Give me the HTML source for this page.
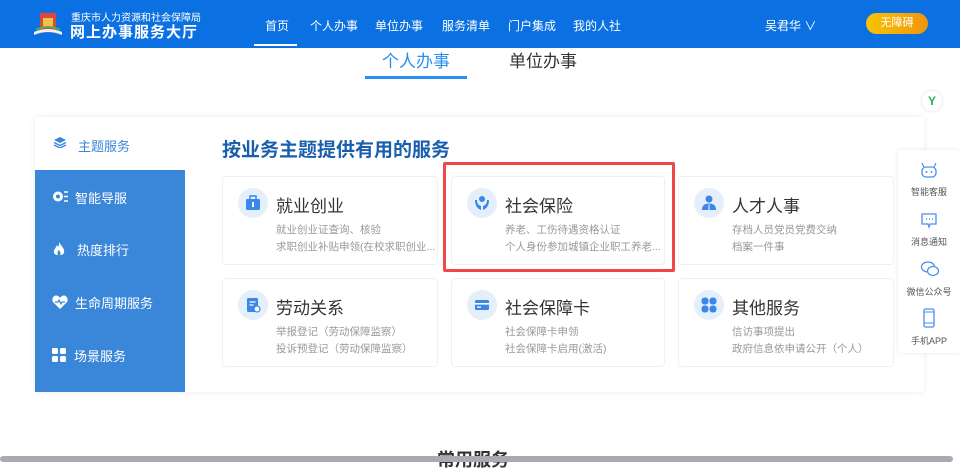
<!DOCTYPE html>
<html><head><meta charset="utf-8"><style>
*{margin:0;padding:0;box-sizing:border-box}
body{width:960px;height:462px;overflow:hidden;background:#fff;font-family:"Liberation Sans","Noto Sans CJK SC",sans-serif;position:relative}
.hdr{position:absolute;left:0;top:0;width:960px;height:48px;background:#0b70e1}
.a{position:absolute;white-space:nowrap}
.nav{color:#fff;font-size:12px;top:17px}
.card{position:absolute;width:216px;height:89px;border:1px solid #eef0f3;border-radius:4px;background:#fff}
.ic{position:absolute;left:15px;top:11px;width:30px;height:30px;border-radius:50%;background:#e5effc}
.ic svg{position:absolute;left:7px;top:7px}
.ct{position:absolute;left:53px;top:15px;font-size:17px;color:#333}
.cs{position:absolute;left:53px;font-size:10.5px;color:#999;width:160px;white-space:nowrap;overflow:hidden;text-overflow:ellipsis}
.side{position:absolute;color:#fff;font-size:13px;left:35px;width:150px}
.side svg{position:absolute;left:17px;top:2px}
.side span{position:absolute;left:40px}
.rt{position:absolute;left:898px;width:62px;text-align:center;font-size:9px;color:#555}
.rti{position:absolute;left:920px}
</style></head><body>
<div class="hdr"></div>
<svg class="a" style="left:32px;top:10px" width="32" height="28" viewBox="0 0 32 28"><rect x="8" y="3" width="16" height="17" fill="#e0473a"/><rect x="11" y="8" width="10" height="10" fill="#f5c04a"/><path d="M2 22 Q16 16 30 22 L30 25 Q16 19 2 25Z" fill="#f0f0f0"/><path d="M4 20 Q16 14 28 20" stroke="#4bb04b" stroke-width="2" fill="none"/></svg>
<div class="a" style="left:71px;top:9px;color:#fff;font-size:10px">重庆市人力资源和社会保障局</div>
<div class="a" style="left:70px;top:21px;color:#fff;font-size:15px;font-weight:bold;letter-spacing:1px">网上办事服务大厅</div>
<div class="a nav" style="left:265px">首页</div>
<div class="a" style="left:254px;top:44px;width:43px;height:2px;background:#fff"></div>
<div class="a nav" style="left:310px">个人办事</div>
<div class="a nav" style="left:375px">单位办事</div>
<div class="a nav" style="left:442px">服务清单</div>
<div class="a nav" style="left:508px">门户集成</div>
<div class="a nav" style="left:573px">我的人社</div>
<div class="a nav" style="left:765px">吴君华 ∨</div>
<div class="a" style="left:866px;top:13px;width:62px;height:21px;border-radius:11px;background:linear-gradient(90deg,#f8c408,#f0960a);color:#fff;font-size:11px;text-align:center;line-height:21px">无障碍</div>
<div class="a" style="left:382px;top:47px;font-size:17px;color:#2a8ff0">个人办事</div>
<div class="a" style="left:365px;top:76px;width:102px;height:3px;background:#2a8ff0"></div>
<div class="a" style="left:509px;top:47px;font-size:17px;color:#333">单位办事</div>
<div class="a" style="left:922px;top:91px;width:20px;height:20px;border-radius:50%;background:#fff;box-shadow:0 0 3px rgba(0,0,0,.15);color:#2fb14a;font-weight:bold;font-size:12px;text-align:center;line-height:20px">Y</div>
<div class="a" style="left:35px;top:117px;width:889px;height:275px;background:#fff;box-shadow:0 0 6px rgba(0,0,0,.08)"></div>
<div class="a" style="left:35px;top:170px;width:150px;height:222px;background:#3a86d9"></div>
<svg class="a" style="left:53px;top:136px" width="14" height="12" viewBox="0 0 14 12"><path d="M7 1L13 4L7 7L1 4Z" fill="#3a86d9"/><path d="M1 6.5L7 9.5L13 6.5M1 9L7 12L13 9" stroke="#3a86d9" stroke-width="1.3" fill="none"/></svg>
<div class="a" style="left:78px;top:136px;font-size:13px;color:#3a86d9">主题服务</div>
<div class="side" style="top:188px"><svg width="16" height="13" viewBox="0 0 16 13"><circle cx="6" cy="6.5" r="5" fill="#fff"/><circle cx="6" cy="6.5" r="2" fill="#3a86d9"/><path d="M12 2h4M12 6.5h4M12 11h4" stroke="#fff" stroke-width="1.5"/></svg><span>智能导服</span></div>
<div class="side" style="top:240px"><svg width="14" height="15" viewBox="0 0 14 15"><path d="M7 0C9 4 13 6 12 11C11 14 3 14 2 11C1 8 4 6 5 3C6 5 7 6 7 0Z" fill="#fff"/><path d="M7 14C5 13 5 10 7 8C9 10 9 13 7 14Z" fill="#3a86d9"/></svg><span style="left:42px">热度排行</span></div>
<div class="side" style="top:293px"><svg width="16" height="14" viewBox="0 0 16 14"><path d="M8 14L1.5 7.5C-1 5 1 0 4.5 0.5C6.5 0.8 7.5 2 8 3C8.5 2 9.5 0.8 11.5 0.5C15 0 17 5 14.5 7.5Z" fill="#fff"/><path d="M3 7h3l1-2 2 4 1-2h3" stroke="#3a86d9" stroke-width="1.2" fill="none"/></svg><span>生命周期服务</span></div>
<div class="side" style="top:346px"><svg width="14" height="14" viewBox="0 0 14 14"><rect x="0" y="0" width="6" height="6" rx="1.5" fill="#fff"/><rect x="8" y="0" width="6" height="6" rx="1.5" fill="#fff"/><rect x="0" y="8" width="6" height="6" rx="1.5" fill="#fff"/><rect x="8" y="8" width="6" height="6" rx="1.5" fill="#fff"/></svg><span style="left:39px">场景服务</span></div>
<div class="a" style="left:222px;top:135px;font-size:19px;font-weight:bold;color:#1a5fae">按业务主题提供有用的服务</div>
<div class="card" style="left:222px;top:176px"><div class="ic"><svg width="16" height="16" viewBox="0 0 16 16"><rect x="1" y="4" width="14" height="11" rx="1.5" fill="#3a86e9"/><rect x="5" y="1" width="6" height="4" fill="none" stroke="#3a86e9" stroke-width="1.5"/><rect x="7" y="7" width="2" height="5" fill="#fff"/></svg></div><div class="ct">就业创业</div><div class="cs" style="top:45px">就业创业证查询、核验</div><div class="cs" style="top:62px">求职创业补贴申领(在校求职创业...</div></div>
<div class="card" style="left:451px;top:176px;width:214px"><div class="ic"><svg width="16" height="16" viewBox="0 0 16 16"><circle cx="8" cy="4" r="3" fill="#3a86e9"/><path d="M1 5C1 11 4 14 7 15L7 11C4 10 3 8 3 5Z M15 5C15 11 12 14 9 15L9 11C12 10 13 8 13 5Z" fill="#3a86e9"/></svg></div><div class="ct">社会保险</div><div class="cs" style="top:45px">养老、工伤待遇资格认证</div><div class="cs" style="top:62px">个人身份参加城镇企业职工养老...</div></div>
<div class="card" style="left:678px;top:176px"><div class="ic"><svg width="16" height="16" viewBox="0 0 16 16"><circle cx="8" cy="4" r="3.5" fill="#3a86e9"/><path d="M1 15C1 10 4 8.5 8 8.5C12 8.5 15 10 15 15Z" fill="#3a86e9"/><path d="M8 9.5V15" stroke="#fff" stroke-width="1"/></svg></div><div class="ct">人才人事</div><div class="cs" style="top:45px">存档人员党员党费交纳</div><div class="cs" style="top:62px">档案一件事</div></div>
<div class="card" style="left:222px;top:278px"><div class="ic"><svg width="16" height="16" viewBox="0 0 16 16"><rect x="2" y="1" width="11" height="14" rx="1.5" fill="#3a86e9"/><path d="M4.5 5h6M4.5 8h4" stroke="#fff" stroke-width="1.2"/><circle cx="12" cy="12" r="3" fill="#fff" stroke="#3a86e9" stroke-width="1.2"/></svg></div><div class="ct">劳动关系</div><div class="cs" style="top:45px">举报登记（劳动保障监察）</div><div class="cs" style="top:62px">投诉预登记（劳动保障监察）</div></div>
<div class="card" style="left:451px;top:278px;width:214px"><div class="ic"><svg width="16" height="16" viewBox="0 0 16 16"><rect x="1" y="3" width="14" height="10" rx="1.5" fill="#3a86e9"/><rect x="1" y="6" width="14" height="1.6" fill="#fff"/><rect x="3" y="9.5" width="4" height="1.3" fill="#fff"/></svg></div><div class="ct">社会保障卡</div><div class="cs" style="top:45px">社会保障卡申领</div><div class="cs" style="top:62px">社会保障卡启用(激活)</div></div>
<div class="card" style="left:678px;top:278px"><div class="ic"><svg width="16" height="16" viewBox="0 0 16 16"><rect x="0.5" y="0.5" width="7" height="7" rx="3" fill="#3a86e9"/><rect x="8.5" y="0.5" width="7" height="7" rx="3" fill="#3a86e9"/><rect x="0.5" y="8.5" width="7" height="7" rx="3" fill="#3a86e9"/><rect x="8.5" y="8.5" width="7" height="7" rx="3" fill="#3a86e9"/></svg></div><div class="ct">其他服务</div><div class="cs" style="top:45px">信访事项提出</div><div class="cs" style="top:62px">政府信息依申请公开（个人）</div></div>
<div class="a" style="left:443px;top:162px;width:232px;height:110px;border:3px solid #f04848;border-radius:2px"></div>
<div class="a" style="left:898px;top:150px;width:62px;height:203px;background:#fff;box-shadow:0 0 5px rgba(0,0,0,.1);border-radius:3px"></div>
<svg class="rti" style="top:162px" width="18" height="18" viewBox="0 0 18 18"><rect x="2" y="5" width="14" height="10" rx="4" fill="none" stroke="#4a8ff0" stroke-width="1.3"/><path d="M4 5L2 1M14 5L16 1" stroke="#4a8ff0" stroke-width="1.2"/><circle cx="6.5" cy="10" r="1" fill="#4a8ff0"/><circle cx="11.5" cy="10" r="1" fill="#4a8ff0"/></svg>
<div class="rt" style="top:185px">智能客服</div>
<svg class="rti" style="top:212px" width="18" height="18" viewBox="0 0 18 18"><path d="M2 2h14v10h-6l-1 3-1-3H2Z" fill="none" stroke="#4a8ff0" stroke-width="1.3"/><path d="M6 7h1M9 7h1M12 7h1" stroke="#4a8ff0" stroke-width="1.5"/></svg>
<div class="rt" style="top:235px">消息通知</div>
<svg class="rti" style="top:260px" width="20" height="18" viewBox="0 0 20 18"><ellipse cx="8" cy="7" rx="6.5" ry="5" fill="none" stroke="#4a8ff0" stroke-width="1.3"/><ellipse cx="13" cy="11" rx="5.5" ry="4.5" fill="#fff" stroke="#4a8ff0" stroke-width="1.3"/></svg>
<div class="rt" style="top:285px">微信公众号</div>
<svg class="rti" style="top:308px" width="18" height="20" viewBox="0 0 18 20"><rect x="4" y="1" width="10" height="18" rx="1.5" fill="none" stroke="#4a8ff0" stroke-width="1.3"/><path d="M4 15h10M4 4h10" stroke="#4a8ff0" stroke-width="1"/></svg>
<div class="rt" style="top:334px">手机APP</div>
<div class="a" style="left:437px;top:446px;font-size:18px;font-weight:bold;color:#333">常用服务</div>
<div class="a" style="left:0;top:456px;width:953px;height:6px;background:#a8abb3;border-radius:3px"></div>
</body></html>
